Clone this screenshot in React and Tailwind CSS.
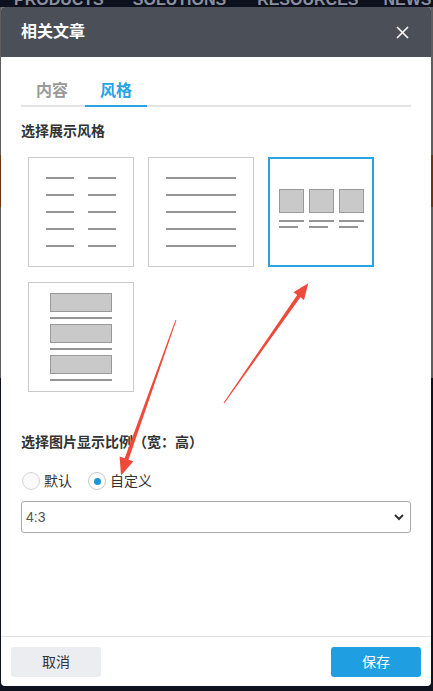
import { useState } from 'react';

const FONT = "[font-family:'Liberation_Sans','Noto_Sans_CJK_SC',sans-serif]";

// thumbnail drawings for each layout option
const TwoColumnList = () => (
  <div className="flex gap-[14px]">
    {[0, 1].map((c) => (
      <div key={c} className="flex flex-col gap-[15px]">
        {[0, 1, 2, 3, 4].map((r) => (
          <div key={r} className="w-[28px] h-[2px] bg-[#959595]" />
        ))}
      </div>
    ))}
  </div>
);

const SingleList = () => (
  <div className="flex flex-col gap-[15px]">
    {[0, 1, 2, 3, 4].map((r) => (
      <div key={r} className="w-[70px] h-[2px] bg-[#959595]" />
    ))}
  </div>
);

const ImageGrid = () => (
  <div className="flex gap-[5px] -mt-[8px]">
    {[0, 1, 2].map((c) => (
      <div key={c} className="flex flex-col">
        <div className="w-[25px] h-[24px] border border-[#999] bg-[#c9c9c9]" />
        <div className="mt-[7px] w-[25px] h-[2px] bg-[#959595]" />
        <div className="mt-[4px] w-[19px] h-[2px] bg-[#959595]" />
      </div>
    ))}
  </div>
);

const ImageList = () => (
  <div className="flex flex-col gap-[5px]">
    {[0, 1, 2].map((r) => (
      <div key={r} className="flex flex-col gap-[5px]">
        <div className="w-[62px] h-[19px] border border-[#999] bg-[#c9c9c9]" />
        <div className="w-[62px] h-[2px] bg-[#959595]" />
      </div>
    ))}
  </div>
);

const styles = [
  { id: 'two', view: <TwoColumnList /> },
  { id: 'list', view: <SingleList /> },
  { id: 'grid', view: <ImageGrid /> },
  { id: 'rows', view: <ImageList /> },
];

const Radio = ({ checked, label, onClick }) => (
  <label className="flex items-center gap-[4px] cursor-pointer" onClick={onClick}>
    <span
      className={`w-[18px] h-[18px] rounded-full border flex items-center justify-center ${
        checked ? 'border-[#c8c8c8] bg-white' : 'border-[#d6d6d6] bg-[#fafafa]'
      }`}
    >
      {checked && <span className="w-[7px] h-[7px] rounded-full bg-[#1d95d6]" />}
    </span>
    <span className="text-[14px] leading-[20px] text-[#333]">{label}</span>
  </label>
);

const Arrows = () => (
  <svg className="absolute inset-0 pointer-events-none" width="433" height="691" viewBox="0 0 433 691">
    <polygon
      fill="#ee4a3c"
      points="223.6,402.7 297.2,294.9 293.5,292.3 308.3,283.3 304,300 300.4,297.3 224.4,403.3"
    />
    <polygon
      fill="#ee4a3c"
      points="175.6,319.8 124.7,458.3 119.6,456.5 121,475.5 133.4,461.3 128.5,459.7 176.4,320.2"
    />
  </svg>
);

export default function App() {
  const [tab, setTab] = useState('style');
  const [picked, setPicked] = useState('grid');
  const [ratioMode, setRatioMode] = useState('custom');

  return (
    <div className={`relative w-[433px] h-[691px] overflow-hidden ${FONT}`}>
      {/* page behind the dialog */}
      <div className="flex flex-col h-full">
        <div className="h-[7px] bg-[#0d101d] relative overflow-hidden">
          <div className="flex -mt-[12px] text-[16px] font-bold text-[#8b90a0] whitespace-nowrap">
            <span className="ml-[14px]">PRODUCTS</span>
            <span className="ml-[29px]">SOLUTIONS</span>
            <span className="ml-[31px]">RESOURCES</span>
            <span className="ml-[25px]">NEWS</span>
          </div>
        </div>
        <div className="h-[371px] bg-[#5e5e5e] flex flex-col">
          <div className="mt-[148px] h-[52px] bg-[#6a3410]" />
        </div>
        <div className="flex-1 bg-[#0e121f]" />
      </div>

      {/* dialog */}
      <div className="absolute left-px top-[7px] w-[430px] h-[679px] bg-white rounded-[4px] flex flex-col overflow-hidden">
        <div className="h-[50px] shrink-0 bg-[#4b4f57] flex items-center justify-between pl-[20px] pr-[22px]">
          <span className="text-white text-[16px] font-bold">相关文章</span>
          <svg width="13" height="13" viewBox="0 0 13 13" stroke="#fff" strokeWidth="1.6">
            <line x1="1" y1="1" x2="12" y2="12" />
            <line x1="12" y1="1" x2="1" y2="12" />
          </svg>
        </div>

        <div className="flex-1 px-[20px] pt-[20px]">
          <div className="flex gap-[2px] border-b-2 border-[#e3e3e3]">
            {[
              { id: 'content', label: '内容' },
              { id: 'style', label: '风格' },
            ].map((t) => (
              <button
                key={t.id}
                onClick={() => setTab(t.id)}
                className={`w-[62px] pt-[3px] pb-[3px] -mb-[2px] border-b-2 text-[16px] leading-[22px] font-bold ${
                  tab === t.id ? 'border-[#2aa2e4] text-[#2aa2e4]' : 'border-transparent text-[#9a9a9a]'
                }`}
              >
                {t.label}
              </button>
            ))}
          </div>

          <div className="mt-[14px] text-[14px] leading-[20px] font-bold text-[#333]">选择展示风格</div>

          <div className="mt-[16px] ml-[7px] grid grid-cols-[repeat(3,106px)] gap-x-[14px] gap-y-[15px]">
            {styles.map((s) => (
              <button
                key={s.id}
                onClick={() => setPicked(s.id)}
                className={`h-[110px] flex items-center justify-center ${
                  picked === s.id ? 'border-2 border-[#2aa2e4]' : 'border border-[#cacaca]'
                }`}
              >
                {s.view}
              </button>
            ))}
          </div>

          <div className="mt-[40px] text-[14px] leading-[20px] font-bold text-[#333]">选择图片显示比例（宽：高）</div>

          <div className="mt-[19px] ml-px flex items-center gap-[16px]">
            <Radio checked={ratioMode === 'default'} label="默认" onClick={() => setRatioMode('default')} />
            <Radio checked={ratioMode === 'custom'} label="自定义" onClick={() => setRatioMode('custom')} />
          </div>

          <div className="mt-[10px] h-[32px] border border-[#a9a9a9] rounded-[3px] flex items-center justify-between pl-[4px] pr-[6px]">
            <span className="text-[14px] text-[#555]">4:3</span>
            <svg width="10" height="7" viewBox="0 0 10 7" fill="none" stroke="#333" strokeWidth="2">
              <polyline points="1,1 5,5 9,1" />
            </svg>
          </div>
        </div>

        <div className="shrink-0 border-t border-[#e4e4e4] px-[10px] pt-[10px] pb-[9px] flex justify-between">
          <button className="w-[90px] h-[30px] rounded-[3px] bg-[#ebedf1] text-[14px] text-[#333]">取消</button>
          <button className="w-[90px] h-[30px] rounded-[3px] bg-[#1f9fe2] text-[14px] text-white">保存</button>
        </div>
      </div>

      <Arrows />
    </div>
  );
}
